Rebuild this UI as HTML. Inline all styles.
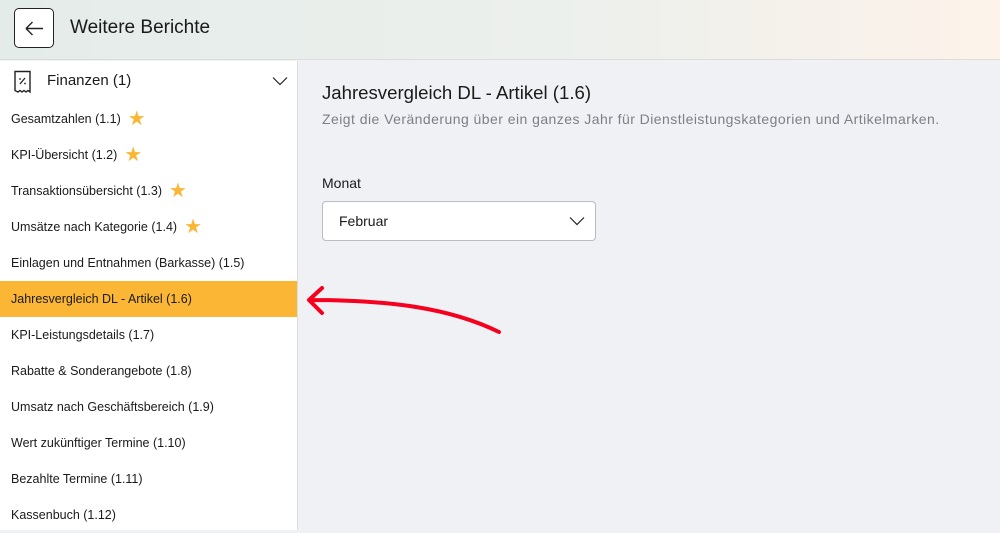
<!DOCTYPE html>
<html><head><meta charset="utf-8"><style>
*{box-sizing:border-box;margin:0;padding:0}
body{width:1000px;height:530px;overflow:hidden;font-family:"Liberation Sans",Arial,sans-serif;background:#f0f1f4;position:relative;color:#1a1a1a}
.hdr{position:absolute;left:0;top:0;width:1000px;height:60px;background:linear-gradient(90deg,#e4ecea 0%,#edf0ec 60%,#fdf3ea 100%);border-bottom:1px solid #dcdcdc}
.back{position:absolute;left:14px;top:8px;width:40px;height:40px;border:1px solid #222;border-radius:5px;background:#fff}
.title{position:absolute;left:70px;top:17px;font-size:19px;color:#1a1a1a}
.side{position:absolute;left:0;top:61px;width:298px;height:469px;background:#fff;border-right:1px solid #dcdcdc}
.fin{position:absolute;left:47px;top:11px;font-size:15px}
.item{position:absolute;left:0;width:297px;height:36px;line-height:36px;padding-left:11px;font-size:12.5px;color:#1a1a1a}
.item.sel{background:#fbb636}
.star{color:#fbb636;font-size:20px;margin-left:7px;vertical-align:-2px}
.main{position:absolute;left:322px}
</style></head><body>
<div class="hdr">
<div class="back"><svg width="40" height="40" viewBox="0 0 40 40"><path d="M11 19.5H28M11 19.5L17.5 13M11 19.5L17.5 26" stroke="#222" stroke-width="1.4" fill="none"/></svg></div>
<div class="title">Weitere Berichte</div>
</div>
<div class="side">
<svg style="position:absolute;left:13px;top:9px" width="20" height="24" viewBox="0 0 20 24"><path d="M2 1.5H17V22L15 20.5L13 22L11 20.5L9 22L7 20.5L5 22L2 20.5Z" fill="none" stroke="#222" stroke-width="1.4"/><path d="M7 14L12 8" stroke="#222" stroke-width="1.3"/><circle cx="7" cy="9" r="0.9" fill="#222"/><circle cx="12" cy="13.5" r="0.9" fill="#222"/></svg>
<div class="fin">Finanzen (1)</div>
<svg style="position:absolute;left:272px;top:15px" width="16" height="10" viewBox="0 0 16 10"><path d="M1 1.5L8 8.5L15 1.5" stroke="#222" stroke-width="1.2" fill="none"/></svg>
<div class="item" style="top:40px">Gesamtzahlen (1.1)<span class="star">★</span></div>
<div class="item" style="top:76px">KPI-Übersicht (1.2)<span class="star">★</span></div>
<div class="item" style="top:112px">Transaktionsübersicht (1.3)<span class="star">★</span></div>
<div class="item" style="top:148px">Umsätze nach Kategorie (1.4)<span class="star">★</span></div>
<div class="item" style="top:184px">Einlagen und Entnahmen (Barkasse) (1.5)</div>
<div class="item sel" style="top:220px">Jahresvergleich DL - Artikel (1.6)</div>
<div class="item" style="top:256px">KPI-Leistungsdetails (1.7)</div>
<div class="item" style="top:292px">Rabatte &amp; Sonderangebote (1.8)</div>
<div class="item" style="top:328px">Umsatz nach Geschäftsbereich (1.9)</div>
<div class="item" style="top:364px">Wert zukünftiger Termine (1.10)</div>
<div class="item" style="top:400px">Bezahlte Termine (1.11)</div>
<div class="item" style="top:436px">Kassenbuch (1.12)</div>
</div>
<div class="main" style="top:82px;font-size:18.6px;color:#1a1a1a">Jahresvergleich DL - Artikel (1.6)</div>
<div class="main" style="top:111px;font-size:14px;letter-spacing:0.45px;color:#7b7f87">Zeigt die Veränderung über ein ganzes Jahr für Dienstleistungskategorien und Artikelmarken.</div>
<div class="main" style="top:175px;font-size:14px">Monat</div>
<div class="main" style="top:201px;width:274px;height:40px;background:#fff;border:1px solid #b8bcc3;border-radius:4px">
<span style="position:absolute;left:16px;top:11px;font-size:14px">Februar</span>
<svg style="position:absolute;left:246px;top:14px" width="16" height="10" viewBox="0 0 16 10"><path d="M1 1.5L8 8.5L15 1.5" stroke="#222" stroke-width="1.2" fill="none"/></svg>
</div>
<svg style="position:absolute;left:0;top:0" width="1000" height="530"><path d="M499 332C450 308 390 300 309 300M322 288L309 300L322 313" stroke="#f5001e" stroke-width="4" fill="none" stroke-linecap="round" stroke-linejoin="round"/></svg>
</body></html>
